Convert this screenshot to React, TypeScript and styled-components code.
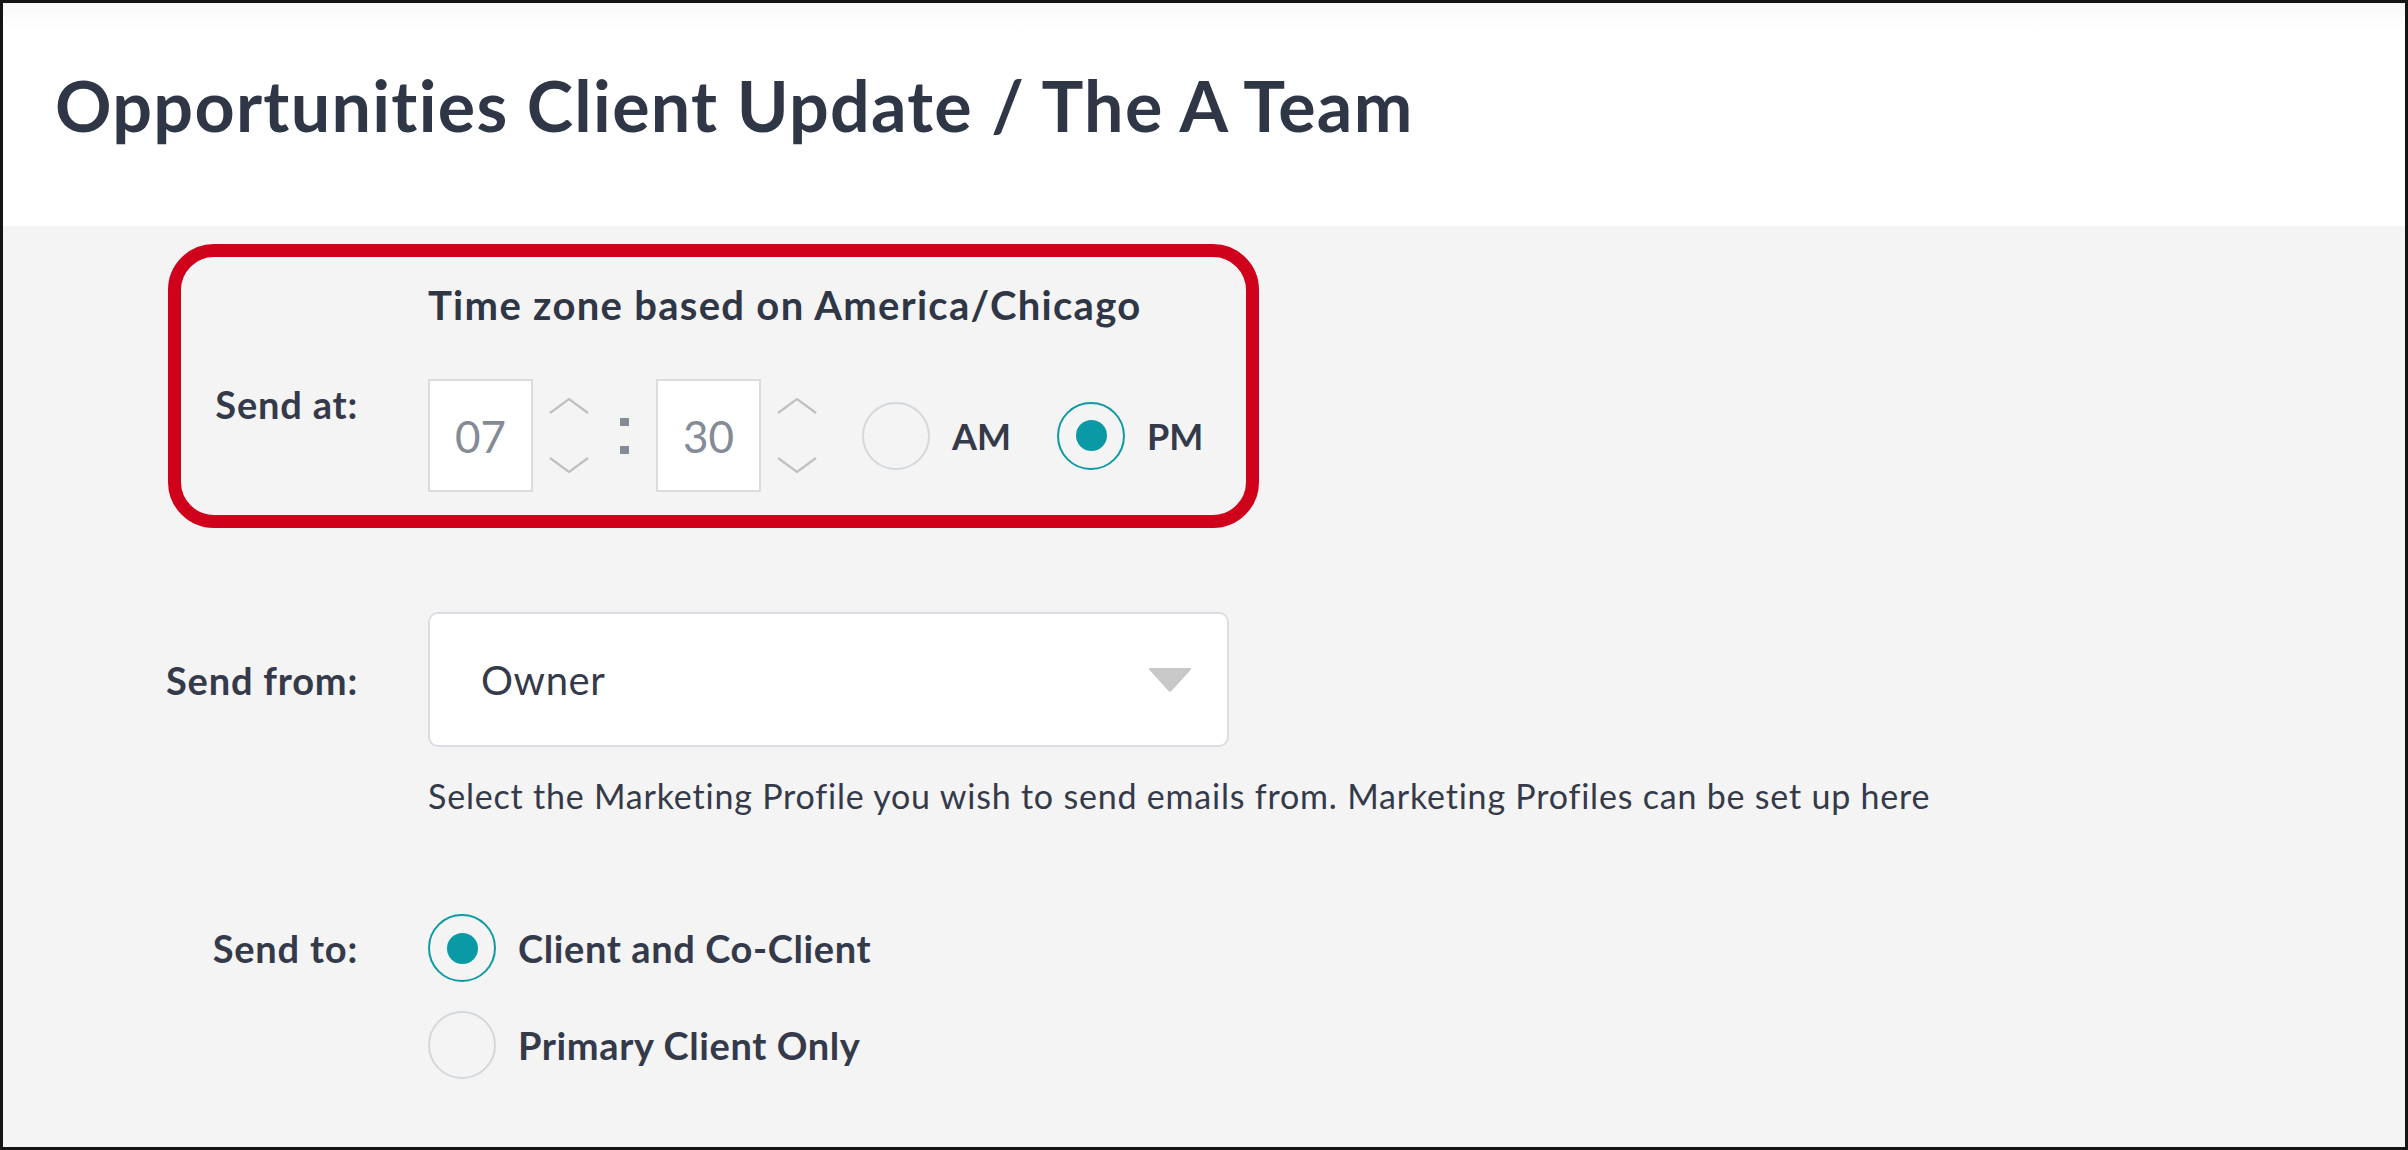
import React from 'react';
import styled, { createGlobalStyle } from 'styled-components';

const GlobalStyle = createGlobalStyle`
  html, body {
    margin: 0;
    padding: 0;
    background: #ffffff;
  }
  body {
    font-family: Lato, "Liberation Sans", sans-serif;
    color: #343a4a;
  }
`;

const Frame = styled.div`
  box-sizing: border-box;
  width: 2408px;
  height: 1150px;
  border: 3px solid #141414;
  background: #f4f4f4;
  display: flex;
  flex-direction: column;
  overflow: hidden;
`;

const Header = styled.header`
  flex: 0 0 223px;
  display: flex;
  align-items: center;
  padding: 0 0 20px 52px;
  box-sizing: border-box;
  background: linear-gradient(#f8f8f8, #ffffff 26px);
`;

const Title = styled.h1`
  margin: 0;
  font: 700 70px/84px Lato, "Liberation Sans", sans-serif;
  color: #2f3646;
  letter-spacing: 1.3px;
`;

const Content = styled.main`
  display: flex;
  flex-direction: column;
  padding: 18px 0 0 165px;
`;

const Row = styled.section<{ $labelWidth?: number; $align?: string }>`
  display: grid;
  grid-template-columns: ${(p) => p.$labelWidth ?? 190}px auto;
  column-gap: 70px;
  align-items: ${(p) => p.$align ?? 'center'};
`;

const HighlightRow = styled(Row)`
  box-sizing: border-box;
  width: 1091px;
  border: 13px solid #d0021b;
  border-radius: 46px;
  padding: 24px 0 23px 0;
`;

const Label = styled.div<{ $offset?: number; $center?: boolean }>`
  justify-self: end;
  align-self: ${(p) => (p.$center ? 'center' : 'start')};
  padding-top: ${(p) => p.$offset ?? 0}px;
  font-size: 38px;
  line-height: 48px;
  font-weight: 700;
  letter-spacing: 0.8px;
  color: #343a4a;
  white-space: nowrap;
`;

const Stack = styled.div`
  display: flex;
  flex-direction: column;
`;

const ZoneNote = styled.div`
  font-size: 40px;
  line-height: 48px;
  font-weight: 700;
  letter-spacing: 1.3px;
  color: #2f3646;
`;

const TimeControls = styled.div`
  display: flex;
  align-items: center;
  margin-top: 50px;
`;

const TimeBox = styled.div`
  box-sizing: border-box;
  width: 105px;
  height: 113px;
  background: #ffffff;
  border: 2px solid #dcdcdc;
  display: flex;
  align-items: center;
  justify-content: center;
  font-size: 44px;
  font-weight: 400;
  color: #858b96;
`;

const Spinner = styled.div`
  display: flex;
  flex-direction: column;
  gap: 43px;
  margin: 0 0 0 16px;
  svg {
    display: block;
  }
`;

const Colon = styled.div`
  display: flex;
  flex-direction: column;
  gap: 20px;
  margin: 0 27px 0 31px;
  span {
    width: 9px;
    height: 8px;
    background: #858b96;
  }
`;

const RadioGroup = styled.div<{ $vertical?: boolean }>`
  display: flex;
  flex-direction: ${(p) => (p.$vertical ? 'column' : 'row')};
  gap: ${(p) => (p.$vertical ? '29px' : '46px')};
  margin-left: ${(p) => (p.$vertical ? 0 : 45)}px;
`;

const Option = styled.label<{ $size?: number; $spacing?: number }>`
  display: flex;
  align-items: center;
  gap: 22px;
  font-size: ${(p) => p.$size ?? 36}px;
  letter-spacing: ${(p) => p.$spacing ?? 0}px;
  font-weight: 700;
  color: #343a4a;
  white-space: nowrap;
`;

const Circle = styled.span<{ $checked?: boolean }>`
  box-sizing: border-box;
  width: 68px;
  height: 68px;
  border-radius: 50%;
  border: ${(p) => (p.$checked ? '2px solid #0e9aa5' : '2px solid #d3d8dd')};
  display: flex;
  align-items: center;
  justify-content: center;
  flex: 0 0 auto;
  &::after {
    content: '';
    width: 31px;
    height: 31px;
    border-radius: 50%;
    background: #0a9aa6;
    display: ${(p) => (p.$checked ? 'block' : 'none')};
  }
`;

const SelectBox = styled.div`
  box-sizing: border-box;
  width: 801px;
  height: 135px;
  background: #ffffff;
  border: 2px solid #dadee2;
  border-radius: 10px;
  display: flex;
  align-items: center;
  justify-content: space-between;
  padding: 0 35px 0 51px;
  font-size: 40px;
  letter-spacing: 0.6px;
  font-weight: 400;
  color: #343a4a;
`;

const HelpText = styled.p`
  margin: 29px 0 0 260px;
  font-size: 34px;
  line-height: 40px;
  letter-spacing: 0.8px;
  font-weight: 400;
  color: #343a4a;
`;

const SendFromRow = styled(Row)`
  margin-top: 84px;
`;

const SendToRow = styled(Row)`
  margin-top: 98px;
`;

const Chevron = ({ up }: { up?: boolean }) => (
  <svg width="40" height="16" viewBox="0 0 40 16">
    <polyline
      points={up ? '1,15 20,1 39,15' : '1,1 20,15 39,1'}
      fill="none"
      stroke="#c0c0c0"
      strokeWidth="2.2"
    />
  </svg>
);

const Caret = () => (
  <svg width="44" height="26" viewBox="0 0 44 26">
    <path d="M2 1 H42 Q44 1 42.5 3 L23.5 24 Q22 25.5 20.5 24 L1.5 3 Q0 1 2 1 Z" fill="#c8c8c8" />
  </svg>
);

const TimeField = ({ value }: { value: string }) => (
  <>
    <TimeBox>{value}</TimeBox>
    <Spinner>
      <Chevron up />
      <Chevron />
    </Spinner>
  </>
);

export default function App() {
  return (
    <>
      <GlobalStyle />
      <Frame>
        <Header>
          <Title>Opportunities Client Update / The A Team</Title>
        </Header>
        <Content>
          <HighlightRow $labelWidth={177}>
            <Label $offset={99}>Send at:</Label>
            <Stack>
              <ZoneNote>Time zone based on America/Chicago</ZoneNote>
              <TimeControls>
                <TimeField value="07" />
                <Colon>
                  <span />
                  <span />
                </Colon>
                <TimeField value="30" />
                <RadioGroup>
                  <Option>
                    <Circle />
                    AM
                  </Option>
                  <Option>
                    <Circle $checked />
                    PM
                  </Option>
                </RadioGroup>
              </TimeControls>
            </Stack>
          </HighlightRow>

          <SendFromRow>
            <Label $center>Send from:</Label>
            <SelectBox>
              <span>Owner</span>
              <Caret />
            </SelectBox>
          </SendFromRow>
          <HelpText>
            Select the Marketing Profile you wish to send emails from. Marketing Profiles can be set up here
          </HelpText>

          <SendToRow $align="start">
            <Label $offset={10}>Send to:</Label>
            <RadioGroup $vertical>
              <Option $size={38} $spacing={0.6}>
                <Circle $checked />
                Client and Co-Client
              </Option>
              <Option $size={38} $spacing={0.6}>
                <Circle />
                Primary Client Only
              </Option>
            </RadioGroup>
          </SendToRow>
        </Content>
      </Frame>
    </>
  );
}
